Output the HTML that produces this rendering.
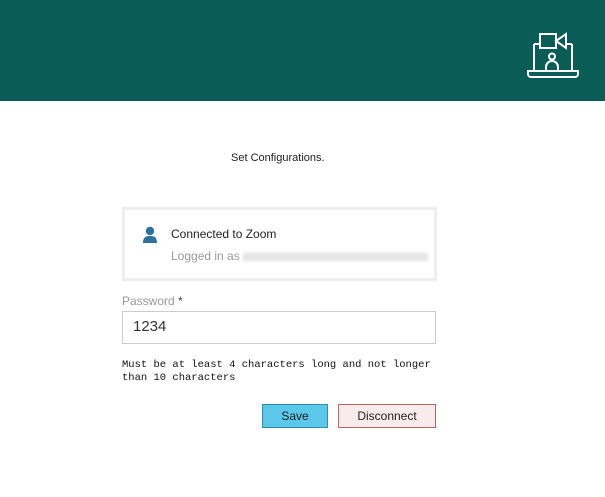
<html><head><style>
body{margin:0;width:605px;height:497px;background:#fff;font-family:"Liberation Sans",sans-serif;position:relative;overflow:hidden}
.h{position:absolute;left:0;top:0;width:605px;height:101px;background:#0a5d56}
.a{position:absolute}
</style></head><body>
<div class="h"></div>
<svg class="a" style="left:526px;top:30px" width="54" height="50" viewBox="0 0 54 50" fill="none" stroke="#fff" stroke-width="2">
<path d="M8 14V41M46 14V41M8 14H14M41 14H46"/>
<rect x="14" y="4" width="16" height="14"/><path d="M30 11L40 4V18Z"/>
<circle cx="26" cy="26.5" r="3"/><path d="M20 41V37a6 6 0 0 1 12 0V41"/>
<path d="M2 41H52V44a3 3 0 0 1-3 3H5a3 3 0 0 1-3-3Z"/>
</svg>
<div class="a" style="left:231px;top:152px;font-size:11px;color:#222">Set Configurations.</div>
<div class="a" style="left:122px;top:207px;width:309px;height:68px;border:3px solid #eee"></div>
<svg class="a" style="left:142px;top:226px" width="16" height="17" viewBox="0 0 16 17"><circle cx="8" cy="5" r="4.2" fill="#2a72a0"/><path d="M1 17c0-6 3-7 7-7s7 1 7 7Z" fill="#2a72a0"/></svg>
<div class="a" style="left:171px;top:227px;font-size:12px;color:#222">Connected to Zoom</div>
<div class="a" style="left:171px;top:249px;font-size:12px;color:#999">Logged in as <span style="display:inline-block;width:185px;height:8px;background:#e4e4e4;filter:blur(1.5px);vertical-align:middle"></span></div>
<div class="a" style="left:122px;top:294px;font-size:12px;color:#999">Password <span style="color:#444">*</span></div>
<div class="a" style="left:122px;top:311px;width:312px;height:31px;border:1px solid #ccc"></div>
<div class="a" style="left:133px;top:318px;font-size:15px;color:#333">1234</div>
<div class="a" style="left:122px;top:359px;font-family:'Liberation Mono',monospace;font-size:10.5px;line-height:13px;color:#111">Must be at least 4 characters long and not longer<br>than 10 characters</div>
<div class="a" style="left:262px;top:404px;width:64px;height:22px;background:#5bc8ea;border:1px solid #2b90b0;font-size:12px;text-align:center;line-height:22px;color:#222">Save</div>
<div class="a" style="left:338px;top:404px;width:96px;height:22px;background:#f8ebeb;border:1px solid #c06060;font-size:12px;text-align:center;line-height:22px;color:#222">Disconnect</div>
</body></html>
